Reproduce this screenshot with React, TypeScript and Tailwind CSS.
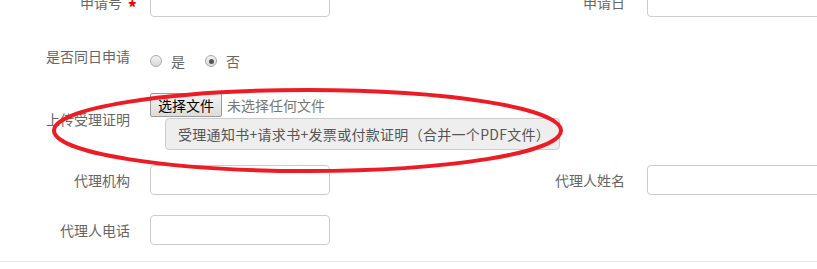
import React from "react";

const font = { fontFamily: '"Noto Sans CJK SC", "Noto Sans", sans-serif' };

function Label({ children, className = "" }: { children: React.ReactNode; className?: string }) {
  return (
    <div className={`shrink-0 text-right text-[14px] text-[#666] leading-[30px] ${className}`}>
      {children}
    </div>
  );
}

function TextInput({ className = "" }: { className?: string }) {
  return <div className={`shrink-0 h-[30px] border border-[#ccc] rounded-[4px] bg-white ${className}`} />;
}

function Radio({ checked, label }: { checked?: boolean; label: string }) {
  return (
    <div className="flex items-center">
      <span className="w-[12px] h-[12px] rounded-full border border-[#a9a9a9] bg-gradient-to-b from-[#f3f3f3] to-[#d9d9d9] flex items-center justify-center">
        {checked && <span className="w-[5px] h-[5px] rounded-full bg-[#555]" />}
      </span>
      <span className="ml-[9px] text-[14px] text-[#666]">{label}</span>
    </div>
  );
}

export default function App() {
  return (
    <div className="relative w-[817px] h-[269px] overflow-hidden bg-white" style={font}>
      <div className="-mt-[13px]">
        {/* 申请号 / 申请日 */}
        <div className="flex h-[30px]">
          <Label className="w-[130px] pr-[8px] relative">
            申请号
            <span className="absolute right-[-7px] top-[5px] text-[#e00] text-[18px] font-bold">*</span>
          </Label>
          <TextInput className="ml-[20px] w-[180px]" />
          <Label className="w-[295px]">申请日</Label>
          <TextInput className="ml-[22px] w-[190px]" />
        </div>

        {/* 是否同日申请 */}
        <div className="flex mt-[24px] h-[28px]">
          <Label className="w-[130px] leading-[28px]">是否同日申请</Label>
          <div className="ml-[20px] pt-[12px] flex gap-[20px] leading-[14px]">
            <Radio label="是" />
            <Radio checked label="否" />
          </div>
        </div>

        {/* 上传受理证明 */}
        <div className="flex mt-[24px] h-[57px]">
          <Label className="w-[130px] pt-[11px] leading-[28px]">上传受理证明</Label>
          <div className="ml-[20px]">
            <div className="flex items-center h-[24px]">
              <button className="h-[24px] px-[7px] border border-[#9a9a9a] rounded-[2px] bg-gradient-to-b from-[#f4f4f4] to-[#dcdcdc] text-[14px] text-black leading-[20px]">
                选择文件
              </button>
              <span className="ml-[5px] text-[14px] text-[#777]">未选择任何文件</span>
            </div>
            <div className="ml-[15px] mt-[1px] w-[395px] h-[32px] border border-[#ccc] rounded-[4px] bg-[#eee] px-[12px] text-[14px] text-[#555] leading-[30px] tracking-[0.3px]">
              受理通知书+请求书+发票或付款证明（合并一个PDF文件）
            </div>
          </div>
        </div>

        {/* 代理机构 / 代理人姓名 */}
        <div className="flex mt-[15px] h-[30px]">
          <Label className="w-[130px]">代理机构</Label>
          <TextInput className="ml-[20px] w-[180px]" />
          <Label className="w-[295px]">代理人姓名</Label>
          <TextInput className="ml-[22px] w-[190px]" />
        </div>

        {/* 代理人电话 */}
        <div className="flex mt-[20px] h-[30px]">
          <Label className="w-[130px]">代理人电话</Label>
          <TextInput className="ml-[20px] w-[180px]" />
        </div>

        <div className="mt-[16px] border-t border-[#e5e5e5]" />
      </div>

      {/* hand-drawn highlight */}
      <svg className="absolute left-0 top-0 pointer-events-none" width="817" height="269">
        <ellipse cx="307.5" cy="130.5" rx="253.5" ry="40.5" fill="none" stroke="#ed1c24" strokeWidth="4" />
      </svg>
    </div>
  );
}
